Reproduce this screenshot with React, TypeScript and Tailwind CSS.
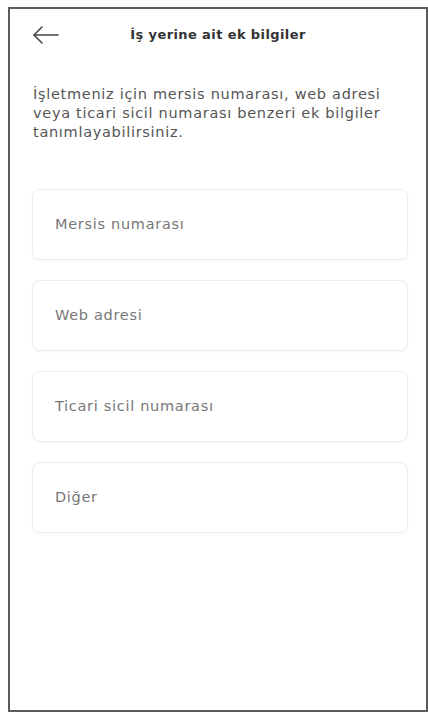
import React from "react";

const fields = ["Mersis numarası", "Web adresi", "Ticari sicil numarası", "Diğer"];

export default function App() {
  return (
    <div
      className="w-[428px] h-[712px] bg-white pl-[8px] pt-[7px]"
      style={{ fontFamily: '"DejaVu Sans", "Noto Sans", sans-serif' }}
    >
      <div className="w-[420px] h-[705px] border-2 border-[#5c5c5c] bg-white flex flex-col">
        <div className="relative h-[50px] flex items-center justify-center">
          <svg
            className="absolute left-[22px] top-[16px]"
            width="28"
            height="20"
            viewBox="0 0 28 20"
            fill="none"
            stroke="#444"
            strokeWidth="1.6"
            strokeLinecap="round"
            strokeLinejoin="round"
          >
            <path d="M10 2 L2 10 L10 18" />
            <path d="M2 10 H26" />
          </svg>
          <span className="text-[13px] font-bold tracking-[0.4px] text-[#333] mt-[2px]">İş yerine ait ek bilgiler</span>
        </div>
        <p className="mt-[26px] pl-[23px] pr-[14px] text-[14.5px] tracking-[0.7px] leading-[19px] text-[#555]">
          İşletmeniz için mersis numarası, web adresi veya ticari sicil numarası benzeri ek bilgiler tanımlayabilirsiniz.
        </p>
        <div className="mt-[47px] pl-[22px] pr-[18px] flex flex-col gap-[20px]">
          {fields.map((f) => (
            <div
              key={f}
              className="h-[71px] rounded-[8px] border border-[#ececec] shadow-[0_1px_3px_rgba(0,0,0,0.04)] flex items-center pl-[22px] text-[14.5px] tracking-[0.7px] text-[#777]"
            >
              {f}
            </div>
          ))}
        </div>
      </div>
    </div>
  );
}
